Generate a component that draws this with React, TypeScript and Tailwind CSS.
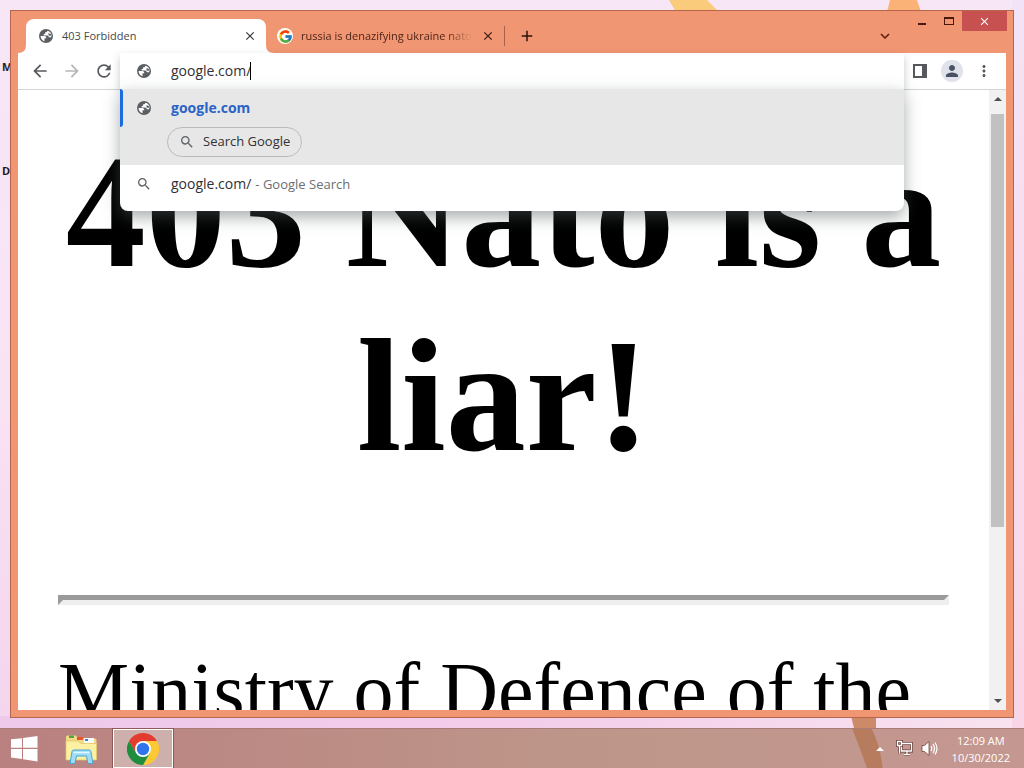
import { MdSearch, MdArrowBack, MdArrowForward, MdRefresh, MdClose, MdAdd, MdPerson, MdMoreVert, MdKeyboardArrowDown } from 'react-icons/md';
import { FcGoogle } from 'react-icons/fc';

function Globe({ className }: { className: string }) {
  return (
    <svg width="14" height="14" viewBox="0 0 16 16" className={className} aria-hidden="true">
      <circle cx="8" cy="8" r="8" fill="#5b5f63" />
      <path d="M1.700 8h4.100q2.700.1 2.700 2.600H6.300v3.500Q2 12.600 1.700 8" fill="#fff" />
      <path d="M9.900 2 8.500 3.800H7v1.500L5.300 6v1.400h4q1.700.3 2 2.100h2.500q2-5.500-3.900-7.500" fill="#fff" />
      <path d="M10.600 5.200h2.200l1.200 1.500-1 1.200-2-.4z" fill="#5b5f63" />
    </svg>
  );
}

function WindowsLogo() {
  return (
    <svg width="28" height="26" viewBox="0 0 28 26" fill="#fff" aria-hidden="true">
      <path d="M1 3.200 12 2.200v9.600H1zM13 2 27.500 0v11.800H13zM1 12.900h11V23L1 21.600zM13 12.900h14.500v12.600L13 23.300z" />
    </svg>
  );
}

function FolderIcon() {
  return (
    <svg width="34" height="32" viewBox="0 0 34 32" aria-hidden="true">
      <path d="M2 4q0-1.500 1.500-1.500H12l2 3h17q1.500 0 1.500 1.500v20H2z" fill="#f2d983" />
      <path d="M5 2.500h5V5H5z" fill="#52a447" />
      <path d="M13 4h6v3h-6z" fill="#e9532f" />
      <path d="M20 5h10v5H20z" fill="#f6fbff" />
      <path d="M21 6h3v2h-3z" fill="#3b85c7" />
      <path d="M2 8h12l3 2.500h15.500V27H2z" fill="#fbf0a4" stroke="#e3c465" strokeWidth=".7" />
      <path d="M6 30.500 8 18.500q.3-1.500 2-1.500h15q1.600 0 1.900 1.500l2 12h-5L22.500 23h-10L11 30.500z" fill="#9edcf7" stroke="#4aa5d8" />
      <path d="m9.500 19.500 16-.1" stroke="#e4f8ff" strokeWidth="1.500" />
    </svg>
  );
}

function ChromeIcon() {
  return (
    <svg width="32" height="32" viewBox="0 0 48 48" aria-hidden="true">
      <path d="M24 12h20.800A24 24 0 0 1 24 48l10.400-18z" fill="#fcc934" />
      <path d="M13.600 30 3.200 12A24 24 0 0 0 24 48l10.400-18z" fill="#1e8e3e" />
      <path d="M3.200 12A24 24 0 0 1 44.800 12H24L13.600 30z" fill="#e33b2e" />
      <circle cx="24" cy="24" r="12" fill="#fff" />
      <circle cx="24" cy="24" r="9.300" fill="#2f74ea" />
    </svg>
  );
}

function Wallpaper() {
  return (
    <div className="absolute inset-0 bg-linear-to-b from-[#f6e6f6] via-[#f8e3f3] to-[#f3d3ec]" aria-hidden="true">
      <div className="absolute inset-x-0 bottom-10 h-3 bg-linear-to-r from-[#efc9ea] via-[#f3cdea] via-50% to-[#f9e3f0]" />
      <div className="absolute inset-y-0 right-0 w-3 bg-linear-to-b from-[#f3e3f6] via-[#f9dced] to-[#f8d4e6]" />
      <svg className="absolute top-0 right-[72px] h-3 w-72" viewBox="0 0 288 12">
        <path d="M5 0h38l12 12H12z" fill="#fbcb7c" />
        <path d="M226 0h27l4 12h-34z" fill="#fbb277" />
      </svg>
      <svg className="absolute right-[130px] bottom-10 h-3 w-12" viewBox="0 0 48 12">
        <path d="M5 0h25v12H8z" fill="#cd8a69" />
      </svg>
    </div>
  );
}

function DesktopLabels() {
  return (
    <div className="absolute top-[59px] left-0 flex flex-col gap-[88px] text-[11px] leading-4 font-bold text-[#251b22]">
      <span className="pl-0.5">M</span>
      <span className="pl-0.5">D</span>
    </div>
  );
}

function TabStrip() {
  return (
    <div className="relative flex h-[42px] shrink-0 items-end pl-[15px] text-[11px]">
      <div className="relative flex h-[34px] w-60 items-center rounded-t-lg bg-white pr-2 pl-[13px] text-[#45494d]">
        <svg className="absolute bottom-0 -left-2" width="8" height="8" fill="#fff" aria-hidden="true">
          <path d="M8 0v8H0q8 0 8-8" />
        </svg>
        <svg className="absolute -right-2 bottom-0" width="8" height="8" fill="#fff" aria-hidden="true">
          <path d="M0 0v8h8q-8 0-8-8" />
        </svg>
        <Globe className="mr-[9px]" />
        <span className="flex-1 truncate">403 Forbidden</span>
        <button aria-label="Close 403 Forbidden" className="grid size-4 place-items-center text-[#333]">
          <MdClose size={14} />
        </button>
      </div>
      <div className="flex h-[34px] w-[239px] items-center pr-2 pl-[11px] text-[#4f2419]">
        <span className="mr-2 grid size-4 place-items-center rounded-full bg-white">
          <FcGoogle size={15} />
        </span>
        <span className="flex-1 overflow-hidden whitespace-nowrap mask-r-from-85% mask-r-to-100%">russia is denazifying ukraine nato</span>
        <button aria-label="Close russia is denazifying ukraine nato" className="ml-2 grid size-4 place-items-center text-[#33170f]">
          <MdClose size={14} />
        </button>
        <span className="-mr-2 ml-2 h-5 w-px bg-[#a9614a]" />
      </div>
      <button aria-label="New tab" className="ml-3 grid h-[34px] w-5 place-items-center text-[#2b130d]">
        <MdAdd size={18} />
      </button>
      <div className="flex-1" />
      <button aria-label="Search tabs" className="mr-[118px] grid h-[34px] w-5 place-items-center text-[#541c10]">
        <MdKeyboardArrowDown size={18} />
      </button>
      <div className="absolute top-0 right-[6px] flex h-5">
        <button aria-label="Minimize" className="grid w-[27px] place-items-center">
          <span className="mt-1.5 h-0.5 w-2 bg-[#4a170c]" />
        </button>
        <button aria-label="Maximize" className="grid w-[27px] place-items-center">
          <span className="h-2 w-2.5 border border-t-2 border-[#4a170c]" />
        </button>
        <button aria-label="Close" className="grid w-[45px] place-items-center bg-[#c75050] text-white">
          <MdClose size={13} />
        </button>
      </div>
    </div>
  );
}

function Suggestions() {
  return (
    <div className="absolute inset-x-0 top-full z-10 overflow-hidden rounded-b-lg bg-white shadow-[0_6px_16px_rgba(80,90,90,0.5)]">
      <div className="relative h-[76px] bg-[#e7e7e7]">
        <div className="absolute top-0 left-0 h-[38px] w-[3px] rounded-r bg-[#1a6bdc]" />
        <a href="#google" className="flex h-[38px] items-center text-sm font-bold text-[#2b63c6]">
          <Globe className="mr-5 ml-[17px]" />
          google.com
        </a>
        <button className="ml-[47px] flex h-[30px] items-center rounded-full border border-[#b9bbbe] pr-[11px] pl-[11px] text-[13px] text-[#303134]">
          <MdSearch size={16} className="mr-2 text-[#5f6368]" />
          Search Google
        </button>
      </div>
      <a href="#search" className="flex h-[38px] items-center text-sm text-[#303134]">
        <MdSearch size={16} className="mr-[19px] ml-4 text-[#5f6368]" />
        google.com/<span className="ml-1 text-[13px] text-[#6b6e72]">- Google Search</span>
      </a>
      <div className="h-2" />
    </div>
  );
}

function Toolbar() {
  return (
    <div className="relative z-10 flex h-[37px] shrink-0 items-stretch border-b border-[#d2d4d6] bg-white text-[#55585c]">
      <div className="flex w-[102px] items-center gap-3 pl-3">
        <button aria-label="Back"><MdArrowBack size={20} /></button>
        <button aria-label="Forward" className="text-[#b4b6b8]"><MdArrowForward size={20} /></button>
        <button aria-label="Reload"><MdRefresh size={20} /></button>
      </div>
      <div className="relative flex flex-1 items-center bg-white shadow-[0_4px_8px_rgba(70,80,80,0.3)]">
        <Globe className="mr-5 ml-[17px] shrink-0" />
        <div className="flex flex-1 items-center text-sm text-[#303134]">
          <input aria-label="Address" defaultValue="google.com/" className="field-sizing-content outline-none" />
          <span className="-ml-px h-[18px] w-px bg-black" />
        </div>
        <Suggestions />
      </div>
      <div className="flex w-[102px] items-center pl-[9px]">
        <button aria-label="Side panel" className="flex h-[14px] w-[14px] border-2 border-r-5 border-[#55585c]" />
        <button aria-label="Profile" className="ml-[14px] grid size-[22px] place-items-center rounded-full bg-[#dfe2ea] text-[#4b5263]">
          <MdPerson size={18} />
        </button>
        <button aria-label="Menu" className="ml-3"><MdMoreVert size={18} /></button>
      </div>
    </div>
  );
}

function Page() {
  return (
    <div className="flex min-h-0 flex-1 bg-white">
      <main className="flex-1 overflow-hidden px-10 pt-[30px] font-['Liberation_Serif',serif] text-black">
        <h1 className="mb-[107px] text-center text-[160px] leading-[184px] font-bold">403 Nato is a liar!</h1>
        <hr className="mb-10 border-5 border-t-[#9a9a9a] border-r-[#eee] border-b-[#eee] border-l-[#9a9a9a]" />
        <p className="text-[80px] leading-[92px]">Ministry of Defence of the</p>
      </main>
      <div className="flex w-[17px] flex-col items-center bg-[#f1f1f1]">
        <button aria-label="Scroll up" className="mb-1.5 grid h-[18px] w-full place-items-center">
          <span className="border-x-4 border-b-4 border-x-transparent border-b-[#505050]" />
        </button>
        <div className="h-[413px] w-[13px] bg-[#c1c1c1]" />
        <div className="flex-1" />
        <button aria-label="Scroll down" className="grid h-[18px] w-full place-items-center">
          <span className="border-x-4 border-t-4 border-x-transparent border-t-[#505050]" />
        </button>
      </div>
    </div>
  );
}

function Taskbar() {
  return (
    <footer className="relative flex h-10 shrink-0 items-stretch border-t border-[#a97b78] bg-linear-to-r from-[#b98180] via-[#be978a] via-60% to-[#c59791] text-[11px] text-white">
      <svg className="absolute top-0 right-[140px] h-full w-10" viewBox="0 0 40 40" aria-hidden="true">
        <path d="M8 0h20q9 18 11 40H23Q16 20 8 0" fill="#b06b45" opacity=".65" />
      </svg>
      <button aria-label="Start" className="grid w-12 place-items-center"><WindowsLogo /></button>
      <button aria-label="File Explorer" className="grid w-[65px] place-items-center"><FolderIcon /></button>
      <button aria-label="Google Chrome" className="grid w-[60px] place-items-center border border-white bg-[#cdb0ab] outline outline-[#8d5a58]"><ChromeIcon /></button>
      <div className="flex-1" />
      <button aria-label="Show hidden icons" className="relative mr-2.5 grid w-3 place-items-center">
        <span className="border-x-4 border-b-4 border-x-transparent border-b-white" />
      </button>
      <button aria-label="Network" className="relative mr-2">
        <svg width="17" height="17" viewBox="0 0 17 17" aria-hidden="true">
          <g fill="none" stroke="#6d4541" strokeWidth="3">
            <path d="M6 3.500h9.500V11H5.500V7M8 14.500h6M11 11v3.500M1.500 1.500h4v4h-4zM3.500 5.500v8" />
          </g>
          <g fill="none" stroke="#fff" strokeWidth="1.300">
            <path d="M6 3.500h9.500V11H5.500V7M8 14.500h6M11 11v3.500M1.500 1.500h4v4h-4zM3.500 5.500v8" />
          </g>
        </svg>
      </button>
      <button aria-label="Volume" className="mr-3.5">
        <svg width="17" height="17" viewBox="0 0 17 17" aria-hidden="true">
          <path d="M1 5.500h2.500L8 1.500v14l-4.500-4H1z" fill="#fff" stroke="#6d4541" strokeWidth=".8" />
          <path d="M10 6q1.500 2.500 0 5M12 4q3 4.500 0 9M14 2.500q4 6 0 12" fill="none" stroke="#fff" strokeWidth="1.200" />
        </svg>
      </button>
      <div className="mr-[14px] flex flex-col justify-center text-center leading-[17px]">
        <span>12:09 AM</span>
        <span>10/30/2022</span>
      </div>
    </footer>
  );
}

export default function App() {
  return (
    <div className="relative flex h-screen flex-col overflow-hidden font-['Open_Sans','Noto_Sans',sans-serif] text-xs">
      <Wallpaper />
      <DesktopLabels />
      <section className="relative m-[10px] flex min-h-0 flex-1 flex-col border border-[#b5664c] bg-[#f19672]">
        <TabStrip />
        <div className="mx-[7px] mb-[7px] flex min-h-0 flex-1 flex-col">
          <Toolbar />
          <Page />
        </div>
      </section>
      <Taskbar />
    </div>
  );
}
